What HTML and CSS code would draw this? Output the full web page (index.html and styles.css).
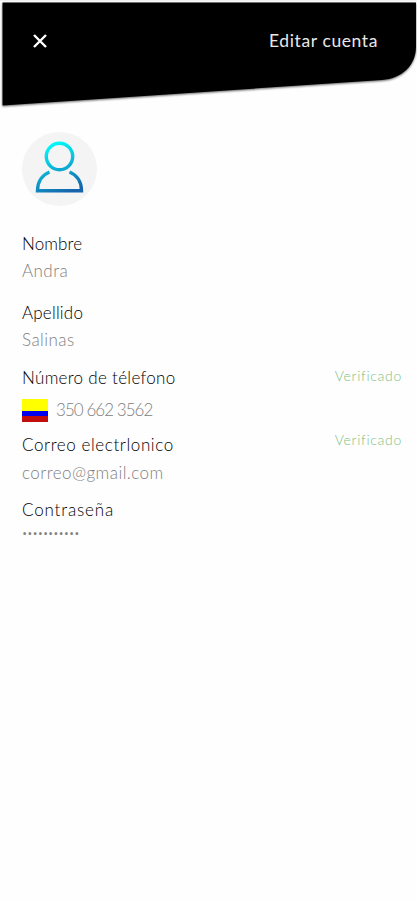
FILE: index.html
```html
<!DOCTYPE html>
<html lang="es">
<head>
  <meta charset="UTF-8">
  <meta name="viewport" content="width=device-width, initial-scale=1.0">
  <title>Editar cuenta</title>
  <link rel="stylesheet" href="styles.css">
</head>
<body>
  <header class="header">
    <svg class="header-bg" width="417" height="112" viewBox="0 0 417 112" aria-hidden="true">
      <path d="M2.500 2.500H416V47C416 65 402 78.500 382 80L2.500 105.500Z"/>
    </svg>
    <button class="close" type="button" aria-label="Cerrar">
      <svg width="16" height="16" viewBox="0 0 16 16"><path d="M2 2L14 14M14 2L2 14"/></svg>
    </button>
    <h1>Editar cuenta</h1>
  </header>

  <main class="account">
    <div class="avatar">
      <svg width="74" height="74" viewBox="0 0 74 74" aria-hidden="true">
        <defs>
          <linearGradient id="user" gradientUnits="userSpaceOnUse" x1="28" y1="12" x2="46" y2="60">
            <stop offset="0" stop-color="#00fbfb"/>
            <stop offset="1" stop-color="#1764ac"/>
          </linearGradient>
        </defs>
        <circle cx="37.500" cy="24.500" r="13.200"/>
        <path d="M27.500 40C20 43 15.500 50 15.500 58.800H59.500C59.500 50 55 43 47.500 40"/>
      </svg>
    </div>

    <div class="field">
      <div class="label nombre">Nombre</div>
      <div class="value">Andra</div>
    </div>

    <div class="field">
      <div class="label apellido">Apellido</div>
      <div class="value">Salinas</div>
    </div>

    <div class="field phone-field">
      <div class="row">
        <div class="label telefono">Número de télefono</div>
        <div class="verified">Verificado</div>
      </div>
      <div class="phone">
        <span class="flag"></span>
        <div class="value number">350 662 3562</div>
      </div>
    </div>

    <div class="field mail-field">
      <div class="row">
        <div class="label correo">Correo electrlonico</div>
        <div class="verified">Verificado</div>
      </div>
      <div class="value mail">correo@gmail.com</div>
    </div>

    <div class="field">
      <div class="label contrasena">Contraseña</div>
      <div class="password">•••••••••••</div>
    </div>
  </main>
</body>
</html>
```

FILE: styles.css
```css
:root {
  --text: #000;
  --muted: #808080;
  --verified: #7fbf83;
}

* {
  margin: 0;
  padding: 0;
  box-sizing: border-box;
}

body {
  font-family: Lato, "Open Sans", sans-serif;
  font-size: 17px;
  font-weight: 300;
  font-variant-ligatures: none;
  color: var(--text);
  background: #fefefe;
  min-height: 100vh;
}

.header {
  position: relative;
  display: flex;
  align-items: center;
  justify-content: space-between;
  height: 112px;
  padding: 0 39px 32px 32px;
  border-top: 1px solid #eef0f1;
}

.header-bg {
  position: absolute;
  top: -1px;
  left: 0;
  z-index: -1;
  filter: drop-shadow(0 1px 1px rgba(0, 0, 0, 0.6));
}

.close {
  width: 16px;
  height: 16px;
  background: none;
  border: 0;
}

.close svg {
  display: block;
  fill: none;
  stroke: #fff;
  stroke-width: 2.4;
}

h1 {
  font-size: 17.5px;
  font-weight: 400;
  line-height: 24px;
  letter-spacing: 0.6px;
  color: #e8e8e8;
}

.account {
  padding: 20px 15px 0 22px;
}

.avatar {
  width: 75px;
  height: 74px;
  margin-bottom: 26px;
  border-radius: 50%;
  background: #f4f4f5;
}

.avatar svg {
  display: block;
  fill: none;
  stroke: url(#user);
  stroke-width: 3.4;
}

.field {
  height: 69px;
}

.label {
  line-height: 24px;
}

.nombre {
  letter-spacing: 0.1px;
}

.apellido {
  letter-spacing: 0.2px;
}

.telefono {
  letter-spacing: 0.3px;
}

.correo {
  letter-spacing: 0.6px;
}

.contrasena {
  letter-spacing: 0.85px;
}

.value {
  margin-top: 3px;
  line-height: 24px;
  letter-spacing: 0.45px;
  color: var(--muted);
}

.row {
  display: flex;
  justify-content: space-between;
}

.verified {
  font-size: 14px;
  line-height: 20px;
  letter-spacing: 0.7px;
  color: var(--verified);
}

.phone-field {
  margin-top: -4px;
  height: 67px;
}

.phone {
  display: flex;
  align-items: center;
  gap: 8px;
  height: 22px;
  margin-top: 9px;
}

.phone .value {
  margin-top: 0;
}

.phone .number {
  letter-spacing: -0.95px;
}

.flag {
  width: 26px;
  height: 23px;
  background: linear-gradient(#ff0 50%, #00e 50% 76%, #c00d0d 76%);
}

.mail-field {
  height: 65px;
}

.mail-field .verified {
  margin-top: -3px;
}

.mail {
  margin-top: 4px;
}

.password {
  margin-top: 1px;
  font-size: 9px;
  line-height: 22px;
  color: var(--muted);
}
```
